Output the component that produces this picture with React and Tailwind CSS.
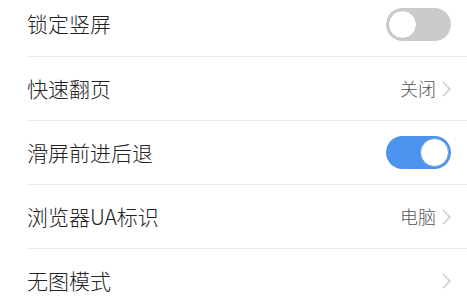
import React from "react";

const rows = [
  { label: "锁定竖屏", type: "switch", on: false },
  { label: "快速翻页", type: "link", value: "关闭" },
  { label: "滑屏前进后退", type: "switch", on: true },
  { label: "浏览器UA标识", type: "link", value: "电脑" },
  { label: "无图模式", type: "link", value: "" },
];

const Chevron = () => (
  <svg width="9" height="16" viewBox="0 0 9 16" fill="none">
    <path d="M1 1l7 7-7 7" stroke="#c6c6c6" strokeWidth="1.3" />
  </svg>
);

const Switch = ({ on }) => (
  <div
    className={
      "relative w-[65px] h-[33px] rounded-full " +
      (on ? "bg-[#4b93ef]" : "bg-[#cbcbcb]")
    }
  >
    <div
      className={
        "absolute top-[2px] w-[29px] h-[29px] rounded-full bg-white border " +
        (on ? "right-[2px] border-[#6a9fe0]" : "left-[2px] border-[#bdbdbd]")
      }
    />
  </div>
);

export default function App() {
  return (
    <div
      className="w-[467px] h-[301px] overflow-hidden bg-white font-light"
      style={{ fontFamily: '"Noto Sans CJK SC", "Noto Sans", sans-serif' }}
    >
      <div className="-mt-[8px] pl-[26px]">
        {rows.map((r, i) => (
          <div
            key={i}
            className={
              "h-[64px] flex items-center justify-between pr-[16px] " +
              (i > 0 ? "border-t border-[#ececec]" : "")
            }
          >
            <span className="pl-[1px] text-[21px] text-[#222]">{r.label}</span>
            {r.type === "switch" ? (
              <Switch on={r.on} />
            ) : (
              <div className="flex items-center gap-[6px]">
                {r.value && (
                  <span className="text-[18px] text-[#555]">{r.value}</span>
                )}
                <Chevron />
              </div>
            )}
          </div>
        ))}
      </div>
    </div>
  );
}
